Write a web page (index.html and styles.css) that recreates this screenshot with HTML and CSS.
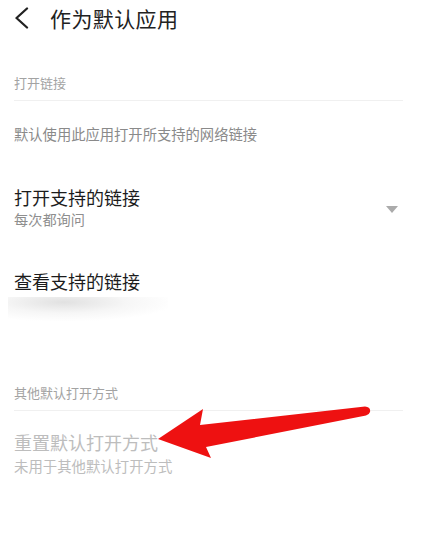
FILE: index.html
```html
<!DOCTYPE html>
<html lang="zh-CN">
<head>
<meta charset="utf-8">
<title>作为默认应用</title>
<link rel="stylesheet" href="styles.css">
</head>
<body>
<div class="page">
  <header class="topbar">
    <svg class="back" width="16" height="22" viewBox="0 0 16 22">
      <polyline points="13,1.5 2.5,11 13,20.5" fill="none" stroke="#222" stroke-width="2.3" stroke-linecap="round" stroke-linejoin="round"/>
    </svg>
    <h1 class="title">作为默认应用</h1>
  </header>

  <div class="section-head first">打开链接</div>
  <p class="desc">默认使用此应用打开所支持的网络链接</p>

  <div class="item item-open">
    <div class="item-text">
      <div class="item-title">打开支持的链接</div>
      <div class="item-sub">每次都询问</div>
    </div>
    <span class="caret"></span>
  </div>

  <div class="item item-view">
    <div class="item-title">查看支持的链接</div>
    <div class="smudge"></div>
  </div>

  <div class="section-head second">其他默认打开方式</div>

  <div class="item item-reset disabled">
    <div class="item-title">重置默认打开方式</div>
    <div class="item-sub">未用于其他默认打开方式</div>
  </div>

  <svg class="arrow" width="423" height="552" viewBox="0 0 423 552">
    <path d="M158,439 L203,409 L200,425 L365,406.5 Q371,407 370,412 Q369,415 366,415.5 L206,447 L211,458 Z" fill="#ee1111"/>
  </svg>
</div>
</body>
</html>
```
FILE: styles.css
```css
* { box-sizing: border-box; }
html, body {
  margin: 0;
  padding: 0;
  background: #ffffff;
}
body {
  font-family: "Noto Sans CJK SC", "Noto Sans", sans-serif;
  width: 423px;
  height: 552px;
  overflow: hidden;
}
.page {
  position: relative;
  width: 423px;
  height: 552px;
  padding: 0 0 0 14px;
}
.topbar {
  display: flex;
  height: 36px;
  padding-top: 7px;
  align-items: flex-start;
}
.back {
  display: block;
}
.title {
  margin: 0 0 0 20px;
  font-size: 21px;
  line-height: 22px;
  font-weight: 400;
  color: #222;
  letter-spacing: 0.4px;
}
.section-head {
  font-size: 13px;
  line-height: 16px;
  color: #a3a3a3;
  padding-bottom: 9px;
  border-bottom: 1px solid #f0f0f0;
  margin-right: 20px;
}
.section-head.first { margin-top: 39px; }
.section-head.second { margin-top: 62px; }
.desc {
  margin: 24px 0 0 0;
  font-size: 14.3px;
  line-height: 18px;
  color: #8a8a8a;
}
.item-title {
  font-size: 18px;
  line-height: 22px;
  color: #1c1c1c;
}
.item-sub {
  margin-top: 3px;
  font-size: 14.2px;
  line-height: 16px;
  color: #8e8e8e;
}
.item-open {
  display: flex;
  align-items: center;
  justify-content: space-between;
  margin-top: 43px;
  margin-right: 25px;
}
.caret {
  width: 0;
  height: 0;
  border-left: 6px solid transparent;
  border-right: 6px solid transparent;
  border-top: 7px solid #ababab;
  margin-top: 6px;
}
.item-view {
  margin-top: 43px;
}
.smudge {
  margin: 5px 0 0 -6px;
  width: 160px;
  height: 26px;
  background: radial-gradient(ellipse 70% 75% at 35% 20%, rgba(200,200,200,0.55), rgba(225,225,225,0.3) 55%, rgba(255,255,255,0) 100%);
}
.item-reset {
  margin-top: 20px;
}
.disabled .item-title { color: #bdbdbd; }
.disabled .item-sub { color: #bdbdbd; margin-top: 5px; font-size: 14.4px; }
.arrow {
  position: absolute;
  left: 0;
  top: 0;
  pointer-events: none;
}
```
